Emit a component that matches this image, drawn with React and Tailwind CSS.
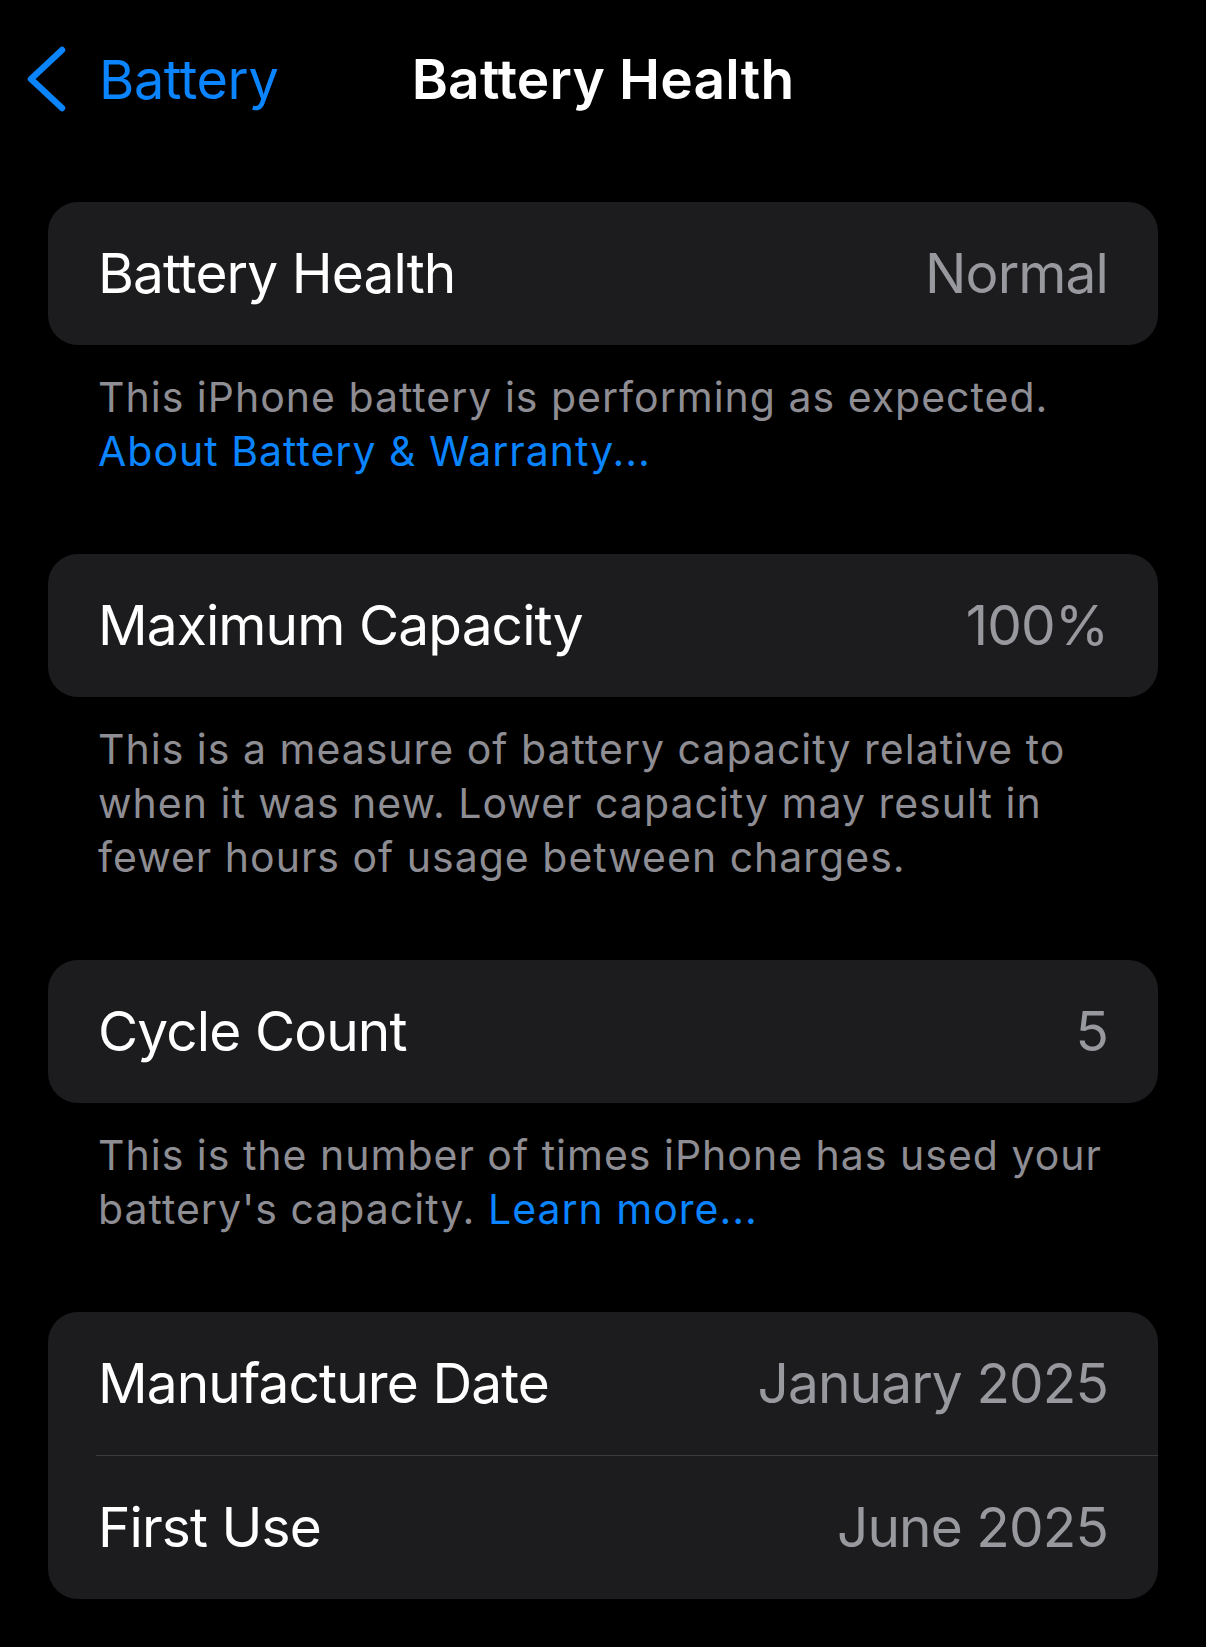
import React from 'react';

const rows = [
    {
        items: [{ label: 'Battery Health', value: 'Normal' }],
        footer: (
            <>
                This iPhone battery is performing as expected.
                <br />
                <span className="text-[#0a84ff]">About Battery &amp; Warranty...</span>
            </>
        ),
    },
    {
        items: [{ label: 'Maximum Capacity', value: '100%' }],
        footer: (
            <>
                This is a measure of battery capacity relative to
                <br />
                when it was new. Lower capacity may result in
                <br />
                fewer hours of usage between charges.
            </>
        ),
    },
    {
        items: [{ label: 'Cycle Count', value: '5' }],
        footer: (
            <>
                This is the number of times iPhone has used your
                <br />
                battery's capacity. <span className="text-[#0a84ff]">Learn more...</span>
            </>
        ),
    },
    {
        items: [
            { label: 'Manufacture Date', value: 'January 2025' },
            { label: 'First Use', value: 'June 2025' },
        ],
    },
];

function Chevron() {
    return (
        <svg width="40" height="66" viewBox="0 0 40 66" fill="none">
            <path d="M35 4 L4 33 L35 62" stroke="#0a84ff" strokeWidth="6.5" strokeLinecap="round" strokeLinejoin="round" />
        </svg>
    );
}

export default function App() {
    return (
        <div className="min-h-[1647px] w-[1206px] bg-black text-white font-['Inter','Liberation_Sans',sans-serif]">
            {/* Nav bar */}
            <div className="relative flex h-[158px] items-center px-[27px]">
                <div className="flex items-center gap-[32px] text-[#0a84ff] text-[54px] tracking-[-0.4px]">
                    <Chevron />
                    <span>Battery</span>
                </div>
                <div className="absolute inset-x-0 text-center text-[55px] font-semibold tracking-[0.2px] pointer-events-none">
                    Battery Health
                </div>
            </div>

            {/* Groups */}
            <div className="px-[48px] pt-[44px]">
                {rows.map((group, gi) => (
                    <div key={gi}>
                        <div className="rounded-[30px] bg-[#1c1c1e] overflow-hidden">
                            {group.items.map((item, ii) => (
                                <div key={item.label}>
                                    {ii > 0 && <div className="ml-[48px] h-px bg-[#3a3a3c]" />}
                                    <div className="flex h-[143px] items-center justify-between px-[50px] text-[55px] tracking-[-0.9px]">
                                        <span className="text-white">{item.label}</span>
                                        <span className="text-[#98989f]">{item.value}</span>
                                    </div>
                                </div>
                            ))}
                        </div>
                        {group.footer && (
                            <p className="px-[50px] pt-[25px] pb-[76px] text-[41px] leading-[54px] tracking-[1px] text-[#8d8d93] whitespace-nowrap">
                                {group.footer}
                            </p>
                        )}
                    </div>
                ))}
            </div>
        </div>
    );
}
